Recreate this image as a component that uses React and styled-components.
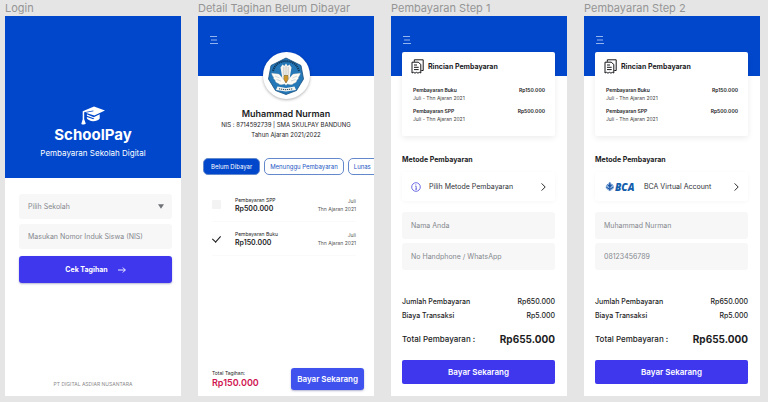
import React from 'react';
import styled, {createGlobalStyle, css} from 'styled-components';

const GlobalStyle = createGlobalStyle`
  * {
    box-sizing: border-box;
  }

  body {
    margin: 0;
    background: #e5e5e5;
    font-family: "Inter", "Liberation Sans", sans-serif;
    color: #1c1c1e;
  }

  button, input, select {
    font-family: inherit;
    margin: 0;
  }

  h1, h2, p, dl, dd, ul {
    margin: 0;
    padding: 0;
  }
`;

const MenuIcon = () => (
    <svg width="8" height="8" viewBox="0 0 8 8" stroke="#b9d0f8" strokeWidth="0.8" fill="none">
        <path d="M0 0.500h7M1 4h6M0 7.500h8"/>
    </svg>
);

const CapIcon = () => (
    <svg width="24" height="20" viewBox="0 0 24 20" fill="#fff">
        <path d="M13 0.500 24 4.600 13.300 9.600 4.600 6.700 12.500 5.300 12.300 4.500 3.200 6.300V13.200L4.800 17.800C3.600 18.800 1.400 18.600 0.300 17.900L1.700 13.200V5.200Z"/>
        <path d="M5.900 8.300 12.700 11.200 18.700 8.300V12.600C17.500 14.400 14.500 15.400 12 15.300 9.400 15.200 7 14 5.900 12.600L5.900 11 12.300 13.300 13.300 12.600 5.900 9.700Z"/>
    </svg>
);

const ArrowIcon = () => (
    <svg width="8" height="6" viewBox="0 0 8 6" fill="none" stroke="#fff" strokeWidth="0.9">
        <path d="M0 3h7.300M4.800 0.500 7.300 3 4.800 5.500"/>
    </svg>
);

const CaretIcon = () => (
    <svg width="6" height="5" viewBox="0 0 6 5" fill="#6f7378">
        <path d="M0 0.300h6L3 4.700Z"/>
    </svg>
);

const ChevronIcon = () => (
    <svg width="5" height="8" viewBox="0 0 5 8" fill="none" stroke="#2b2b2b" strokeWidth="1">
        <path d="M0.600 0.400 4.200 4 0.600 7.600"/>
    </svg>
);

const InfoIcon = () => (
    <svg width="10" height="10" viewBox="0 0 10 10" fill="none" stroke="#4a49dc" strokeWidth="0.8">
        <circle cx="5" cy="5" r="4.300"/>
        <path d="M4.300 4.300H5.200V7.200M4.200 7.200H6M4.800 2.400V3.300"/>
    </svg>
);

const BillIcon = () => (
    <svg width="13" height="15" viewBox="0 0 13 15" fill="none" stroke="#16161a" strokeWidth="1">
        <path d="M3.300 2.800V0.800H12.200V11.500H10.300"/>
        <path d="M1 3.200H7.200L9.800 5.400V14L8.300 13.300 7 14.200 5.400 13.300 4 14.200 2.500 13.300 1 14Z"/>
        <path d="M3 6H6M3 8.300H7.700M3 10.600H7.700"/>
    </svg>
);

const SchoolCrest = () => (
    <svg width="38" height="38" viewBox="0 0 38 38">
        <path d="M19 1 34 8.500 36.500 22 29.500 33.500 19 37.500 8.500 33.500 1.500 22 4 8.500Z" fill="#2478b8" stroke="#174e7d" strokeWidth="0.8"/>
        <path d="M6 14C8 7 13 4.200 19 4.200S30 7 32 14" fill="none" stroke="#12385c" strokeWidth="2" strokeDasharray="1.300 0.700"/>
        <path d="M15 19 13.500 10.500 15.500 7.500 17.300 9 19 6.500 20.700 9 22.500 7.500 24.500 10.500 23 19V24H15Z" fill="#f6f3ec"/>
        <path d="M16.800 10V18M19 9V18M21.200 10V18" stroke="#9aa0a5" strokeWidth="0.500"/>
        <path d="M16.500 22 12 17 4.500 16C5 18 5.500 19.500 6.500 20 6 21.500 7 22.600 8 23 8 25 9.500 26 11 26.300 13 28.500 16 28 17.500 27L19 28.500 20.500 27C22 28 25 28.500 27 26.300 28.500 26 30 25 30 23 31 22.600 32 21.500 31.500 20 32.500 19.500 33 18 33.500 16L26 17 21.500 22Z" fill="#fbfaf5" stroke="#6d8496" strokeWidth="0.300"/>
        <path d="M8 19 12.500 21M9.500 22.500 14 24M30 19 25.500 21M28.500 22.500 24 24" stroke="#a9b8c4" strokeWidth="0.500"/>
        <path d="M17 18.500H21V22.500L19 26 17 22.500Z" fill="#e2b32c" stroke="#6b5524" strokeWidth="0.600"/>
        <path d="M19 19V25" stroke="#a3332c" strokeWidth="0.500"/>
        <path d="M10.500 29.500 19 31 27.500 29.500 29 33 19 34.500 9 33Z" fill="#f4f5f0"/>
        <path d="M12 31.800 19 32.800 26 31.800" fill="none" stroke="#2a4258" strokeWidth="1" strokeDasharray="1.200 0.800"/>
    </svg>
);

const BcaLogo = () => (
    <svg width="32" height="12" viewBox="0 0 32 12" role="img" aria-label="BCA">
        <path d="M5.800 0.800 7.800 3 9.600 4.200 10 7 8 9 5.800 10.200 3.600 9 1.600 7 2 4.200 3.800 3Z" fill="#8fb3dd"/>
        <path d="M5.800 1.500V9.500M3.500 3.500 5.800 6 8.100 3.500M2.300 6.200 5.800 8.300 9.300 6.200" fill="none" stroke="#1b55a8" strokeWidth="1"/>
        <circle cx="5.800" cy="4.500" r="1.200" fill="#1b55a8"/>
        <text x="11" y="9.500" fontFamily="Open Sans, sans-serif" fontSize="10" fontWeight="800" fontStyle="italic" fill="#125eab">BCA</text>
    </svg>
);

const bills = [
    {name: 'Pembayaran Buku', price: 'Rp150.000'},
    {name: 'Pembayaran SPP', price: 'Rp500.000'},
];

const Login = () => (
    <Artboard>
        <BoardName>Login</BoardName>
        <Screen>
            <Hero>
                <CapIcon/>
                <Brand>SchoolPay</Brand>
                <Tagline>Pembayaran Sekolah Digital</Tagline>
            </Hero>
            <LoginForm onSubmit={(e) => e.preventDefault()}>
                <SelectBox>
                    <Select aria-label="Pilih Sekolah">
                        <option>Pilih Sekolah</option>
                    </Select>
                    <CaretIcon/>
                </SelectBox>
                <Field aria-label="Nomor Induk Siswa" placeholder="Masukan Nomor Induk Siswa (NIS)"/>
                <LoginButton>Cek Tagihan <ArrowIcon/></LoginButton>
            </LoginForm>
            <Company>PT DIGITAL ASDIAR NUSANTARA</Company>
        </Screen>
    </Artboard>
);

const Detail = () => (
    <Artboard>
        <BoardName>Detail Tagihan Belum Dibayar</BoardName>
        <Screen>
            <TopBar>
                <MenuButton aria-label="Menu"><MenuIcon/></MenuButton>
            </TopBar>
            <Profile>
                <Avatar><SchoolCrest/></Avatar>
                <StudentName>Muhammad Nurman</StudentName>
                <StudentInfo>NIS : 8714592739 | SMA SKULPAY BANDUNG</StudentInfo>
                <StudentInfo>Tahun Ajaran 2021/2022</StudentInfo>
            </Profile>
            <Tabs>
                <Tab $active>Belum Dibayar</Tab>
                <Tab>Menunggu Pembayaran</Tab>
                <Tab>Lunas</Tab>
            </Tabs>
            <BillList>
                <Bill>
                    <Check type="checkbox" aria-label="Pembayaran SPP"/>
                    <div>
                        <BillName>Pembayaran SPP</BillName>
                        <BillPrice>Rp500.000</BillPrice>
                    </div>
                    <BillDate>Juli<br/>Thn Ajaran 2021</BillDate>
                </Bill>
                <Bill>
                    <Check type="checkbox" defaultChecked aria-label="Pembayaran Buku"/>
                    <div>
                        <BillName>Pembayaran Buku</BillName>
                        <BillPrice>Rp150.000</BillPrice>
                    </div>
                    <BillDate>Juli<br/>Thn Ajaran 2021</BillDate>
                </Bill>
            </BillList>
            <BottomBar>
                <div>
                    <BillName>Total Tagihan:</BillName>
                    <BillTotal>Rp150.000</BillTotal>
                </div>
                <PayButton $compact>Bayar Sekarang</PayButton>
            </BottomBar>
        </Screen>
    </Artboard>
);

const Payment = ({title, logo, method, name, phone}) => (
    <Artboard>
        <BoardName>{title}</BoardName>
        <Screen>
            <TopBar>
                <MenuButton aria-label="Menu"><MenuIcon/></MenuButton>
            </TopBar>
            <PaymentBody>
                <Summary>
                    <SummaryTitle><BillIcon/>Rincian Pembayaran</SummaryTitle>
                    {bills.map((bill) => (
                        <SummaryRow key={bill.name}>
                            <div>
                                <b>{bill.name}</b>
                                <p>Juli - Thn Ajaran 2021</p>
                            </div>
                            <b>{bill.price}</b>
                        </SummaryRow>
                    ))}
                </Summary>
                <SectionTitle>Metode Pembayaran</SectionTitle>
                <Method>
                    {logo}
                    <span>{method}</span>
                    <ChevronIcon/>
                </Method>
                <Fields>
                    <Field $tall aria-label="Nama Anda" placeholder="Nama Anda" defaultValue={name}/>
                    <Field $tall aria-label="No Handphone / WhatsApp" placeholder="No Handphone / WhatsApp" defaultValue={phone}/>
                </Fields>
                <Costs>
                    <CostRow><dt>Jumlah Pembayaran</dt><dd>Rp650.000</dd></CostRow>
                    <CostRow><dt>Biaya Transaksi</dt><dd>Rp5.000</dd></CostRow>
                    <CostRow $total><dt>Total Pembayaran :</dt><dd>Rp655.000</dd></CostRow>
                </Costs>
                <PayButton>Bayar Sekarang</PayButton>
            </PaymentBody>
        </Screen>
    </Artboard>
);

const App = () => (
    <>
        <GlobalStyle/>
        <Board>
            <Login/>
            <Detail/>
            <Payment title="Pembayaran Step 1" logo={<InfoIcon/>} method="Pilih Metode Pembayaran"/>
            <Payment title="Pembayaran Step 2" logo={<BcaLogo/>} method="BCA Virtual Account" name="Muhammad Nurman" phone="08123456789"/>
        </Board>
    </>
);

const Board = styled.main`
  display: grid;
  grid-template-columns: repeat(4, minmax(0, 1fr));
  gap: 17px;
  min-height: 100vh;
  padding: 0 8px 6px 5px;
`;

const Artboard = styled.section`
  display: flex;
  flex-direction: column;
`;

const BoardName = styled.h2`
  font-size: 11px;
  line-height: 16px;
  font-weight: 400;
  color: #959595;
  white-space: nowrap;
`;

const Screen = styled.div`
  flex: 1;
  display: flex;
  flex-direction: column;
  background: #fff;
  overflow: hidden;
`;

const Hero = styled.header`
  display: flex;
  flex-direction: column;
  align-items: center;
  padding: 90px 0 19px;
  background: #0047cc;
  color: #fff;
`;

const Brand = styled.h1`
  font-size: 15px;
  line-height: 18px;
  font-weight: 700;
`;

const Tagline = styled.p`
  padding-top: 3px;
  font-size: 8px;
  line-height: 12px;
`;

const LoginForm = styled.form`
  display: flex;
  flex-direction: column;
  gap: 5px;
  padding: 16px 9px 0 14px;
`;

const fieldStyle = css`
  width: 100%;
  border: 0;
  border-radius: 3px;
  background: #f7f7f8;
  color: #85888d;
  font-size: 7px;
  padding: 0 9px;
  outline: none;
`;

const Field = styled.input`
  ${fieldStyle}
  height: ${({$tall}) => ($tall ? '27px' : '25px')};

  &::placeholder {
    color: #85888d;
    opacity: 1;
  }
`;

const SelectBox = styled.div`
  display: grid;
  align-items: center;

  > * {
    grid-area: 1 / 1;
  }

  svg {
    justify-self: end;
    margin-right: 8px;
    pointer-events: none;
  }
`;

const Select = styled.select`
  ${fieldStyle}
  height: 25px;
  appearance: none;
`;

const buttonStyle = css`
  border: 0;
  border-radius: 3px;
  background: #3f37ee;
  color: #fff;
  font-weight: 600;
`;

const LoginButton = styled.button`
  ${buttonStyle}
  display: flex;
  align-items: center;
  justify-content: center;
  gap: 10px;
  height: 27px;
  margin-top: 2px;
  font-size: 7px;
  font-weight: 700;
  box-shadow: 0 1px 2px rgba(40, 40, 120, .35);
`;

const Company = styled.p`
  margin-top: auto;
  padding-bottom: 8px;
  text-align: center;
  font-size: 5px;
  line-height: 8px;
  color: #8c8c8c;
`;

const TopBar = styled.header`
  flex: none;
  height: 60px;
  padding: 20px 12px;
  background: #0047cc;
`;

const MenuButton = styled.button`
  display: flex;
  padding: 0;
  border: 0;
  background: none;
`;

const Profile = styled.div`
  display: flex;
  flex-direction: column;
  align-items: center;
  margin-top: -24px;
  text-align: center;
`;

const Avatar = styled.div`
  display: flex;
  align-items: center;
  justify-content: center;
  width: 47px;
  height: 47px;
  border-radius: 50%;
  background: #fff;
  box-shadow: 0 1px 3px rgba(0, 0, 0, .3);
`;

const StudentName = styled.h1`
  padding-top: 9px;
  font-size: 9px;
  line-height: 12px;
  font-weight: 600;
`;

const StudentInfo = styled.p`
  font-size: 6px;
  line-height: 10px;
  white-space: nowrap;
`;

const Tabs = styled.nav`
  display: flex;
  gap: 4px;
  padding: 18px 0 0 5px;
`;

const Tab = styled.button`
  flex: none;
  height: 17px;
  padding: 0 ${({$active}) => ($active ? '7px' : '5px')};
  border: 1px solid #6488cc;
  border-radius: 5px;
  background: ${({$active}) => ($active ? '#0047cc' : '#fff')};
  color: ${({$active}) => ($active ? '#fff' : '#1a55c4')};
  font-size: 6px;

  /* runs past the screen edge */
  &:last-child {
    min-width: 58px;
    text-align: left;
  }
`;

const BillList = styled.ul`
  padding: 13px 18px 0 14px;
`;

const Bill = styled.li`
  display: grid;
  grid-template-columns: 10px 1fr auto;
  gap: 13px;
  align-items: center;
  height: 34px;
  border-bottom: 1px solid #fafafa;
`;

const Check = styled.input`
  appearance: none;
  display: flex;
  justify-content: center;
  width: 9px;
  height: 9px;
  border-radius: 1px;
  background: #f3f3f3;

  &:checked {
    background: #fcfcfc;
  }

  &:checked::after {
    content: '';
    width: 4px;
    height: 7px;
    border: solid #16161a;
    border-width: 0 1px 1px 0;
    transform: rotate(42deg);
  }
`;

const BillName = styled.p`
  font-size: 5px;
  line-height: 8px;
`;

const BillPrice = styled.p`
  font-size: 7px;
  line-height: 10px;
  font-weight: 600;
`;

const BillDate = styled.p`
  text-align: right;
  font-size: 5px;
  line-height: 8px;
  color: #555;
`;

const BottomBar = styled.footer`
  display: flex;
  align-items: center;
  justify-content: space-between;
  margin-top: auto;
  padding: 0 10px 6px 14px;
`;

const BillTotal = styled.p`
  font-size: 9px;
  line-height: 12px;
  font-weight: 600;
  color: #cf1450;
`;

const PayButton = styled.button`
  ${buttonStyle}
  height: 24px;
  font-size: 8px;
  border-radius: 2px;

  ${({$compact}) => $compact && css`
    height: 22px;
    padding: 0 6px;
    border-radius: 3px;
    background: #4052ee;
    box-shadow: 0 1px 2px rgba(40, 40, 120, .35);
  `}
`;

const PaymentBody = styled.div`
  flex: 1;
  display: flex;
  flex-direction: column;
  margin-top: -24px;
  padding: 0 12px 12px 11px;
`;

const Summary = styled.div`
  padding: 7px 10px 8px 9px;
  border-radius: 2px;
  background: #fff;
  box-shadow: 0 2px 6px rgba(0, 0, 0, .08);
`;

const SummaryTitle = styled.h1`
  display: flex;
  align-items: center;
  gap: 4px;
  padding-bottom: 12px;
  font-size: 7px;
  line-height: 15px;
  font-weight: 700;
`;

const SummaryRow = styled.div`
  display: flex;
  justify-content: space-between;
  padding: 0 0 5px 2px;
  font-size: 5px;
  line-height: 8px;

  b {
    font-weight: 600;
  }

  p {
    color: #444;
  }
`;

const SectionTitle = styled.h2`
  padding: 18px 0 6px;
  font-size: 7px;
  line-height: 12px;
  font-weight: 700;
`;

const Method = styled.button`
  display: flex;
  align-items: center;
  gap: 8px;
  height: 29px;
  padding: 0 9px;
  border: 0;
  border-radius: 3px;
  background: #fff;
  box-shadow: 0 1px 4px rgba(0, 0, 0, .04);
  color: #2f3237;
  font-size: 7px;

  span {
    flex: 1;
    text-align: left;
  }
`;

const Fields = styled.div`
  display: flex;
  flex-direction: column;
  gap: 4px;
  padding-top: 11px;
`;

const Costs = styled.dl`
  margin-top: auto;
  padding-bottom: 12px;
`;

const CostRow = styled.div`
  display: flex;
  align-items: center;
  justify-content: space-between;
  font-size: 7px;
  line-height: 14px;
  font-weight: 500;

  ${({$total}) => $total && css`
    padding-top: 7px;
    font-size: 8px;
    line-height: 18px;

    dd {
      font-size: 10px;
      font-weight: 700;
    }
  `}
`;

export default App;
